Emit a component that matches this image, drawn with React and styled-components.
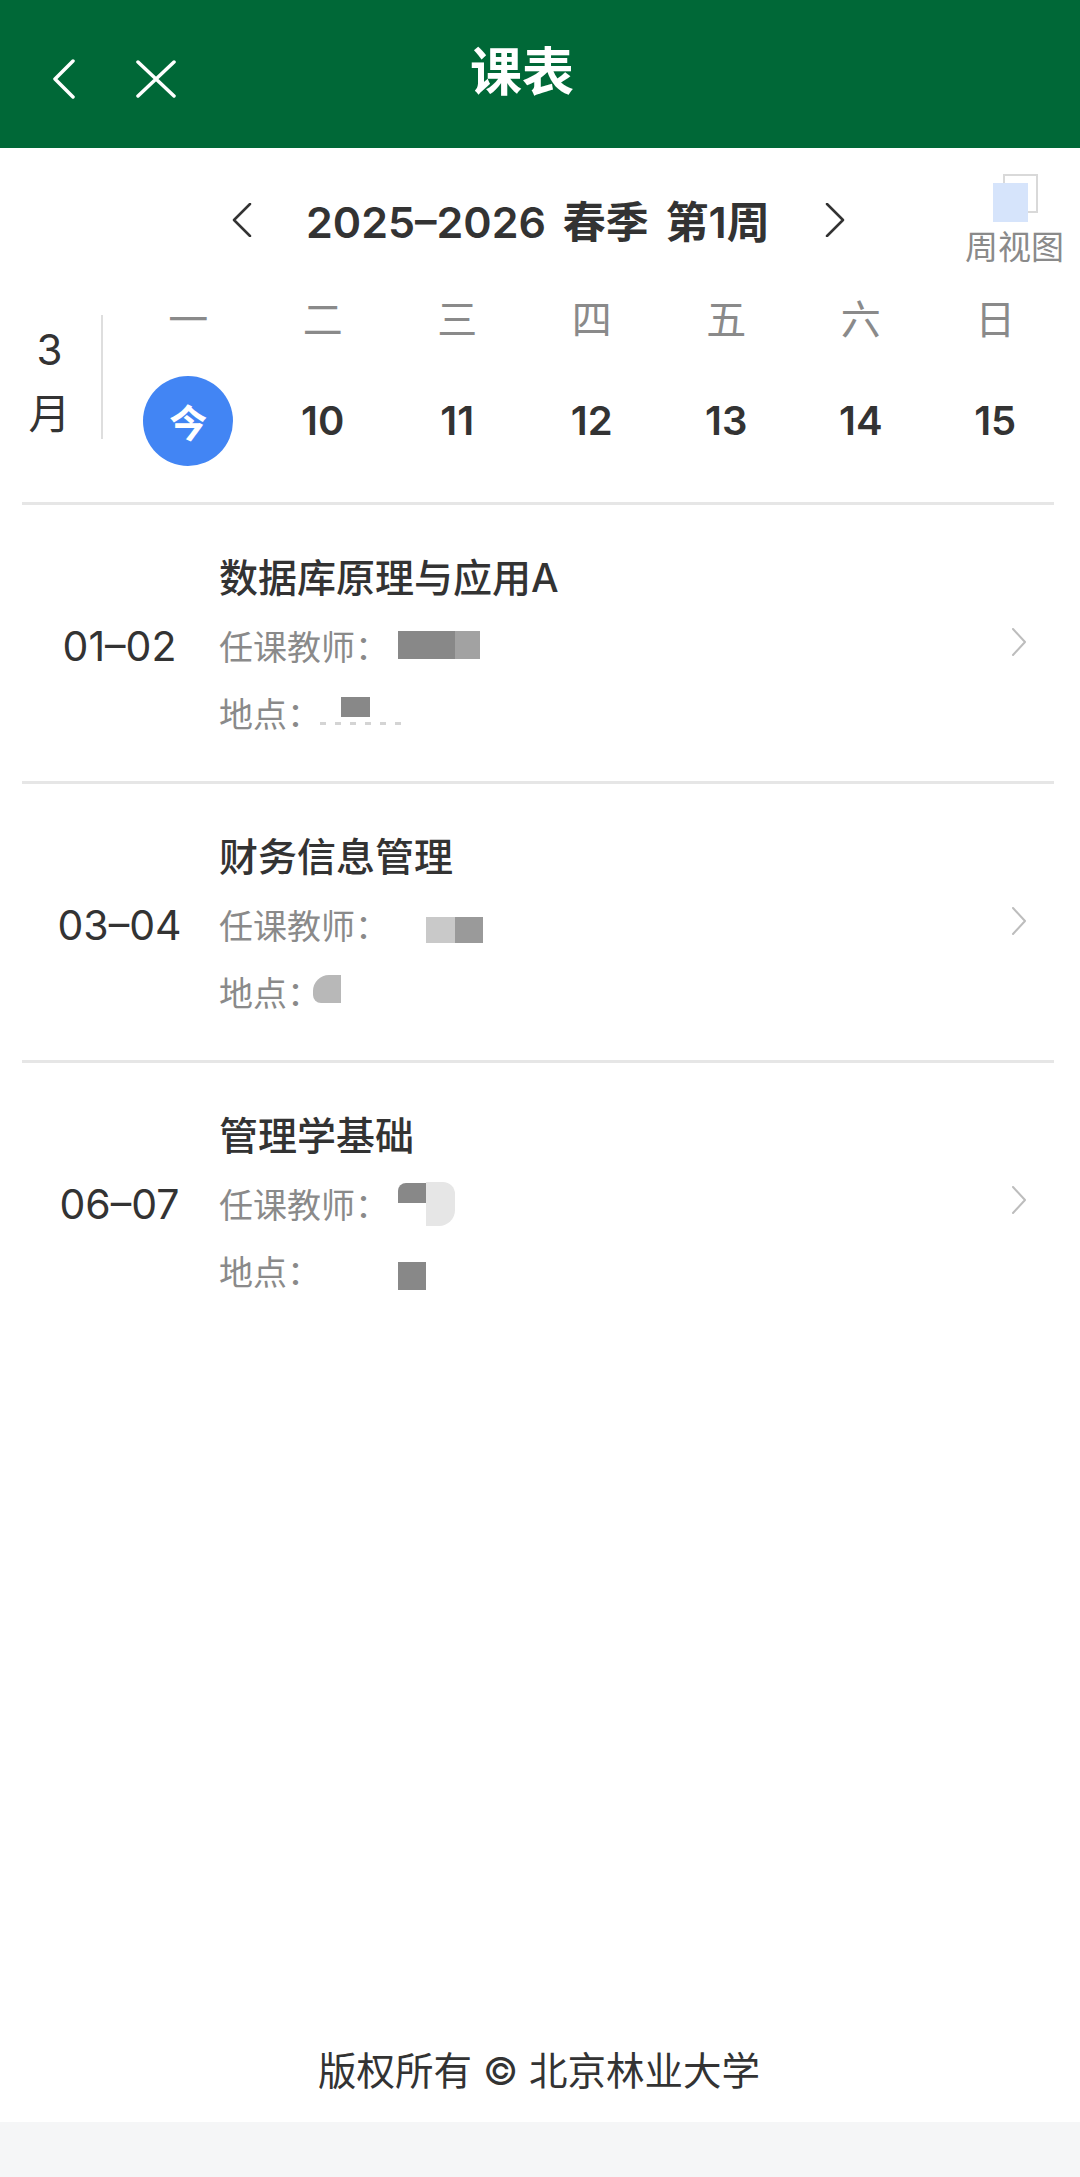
import React from 'react';
import styled, { createGlobalStyle } from 'styled-components';

const GlobalStyle = createGlobalStyle`
html, body { margin: 0; padding: 0; background: #fff; }
body { font-family: "Inter", "Noto Sans CJK SC", sans-serif; color: #333; }
* { box-sizing: border-box; }
`;

const Page = styled.div`
width: 1080px;
height: 2177px;
display: flex;
flex-direction: column;
background: #fff;
`;

const Header = styled.header`
height: 148px;
flex: none;
display: flex;
align-items: flex-start;
background: #006837;
color: #fff;
`;

const NavIcon = styled.svg`
flex: none;
margin-top: ${p => p.$top}px;
margin-left: ${p => p.$left}px;
fill: none;
stroke: #fff;
stroke-width: 3.5;
stroke-linecap: round;
stroke-linejoin: round;
`;

const PageTitle = styled.h1`
margin: 38px 0 0 294px;
font-size: 52px;
line-height: 70px;
font-weight: 700;
`;

const WeekBar = styled.div`
height: 152px;
flex: none;
position: relative;
display: flex;
align-items: flex-start;
padding: 55px 0 0 232px;
`;

const WeekChevron = styled.svg`
flex: none;
fill: none;
stroke: #333;
stroke-width: 2.5;
stroke-linecap: round;
stroke-linejoin: round;
`;

const WeekTitle = styled.div`
width: 573px;
padding-left: 54px;
font-size: 43px;
word-spacing: 6px;
line-height: 50px;
font-weight: 600;
white-space: nowrap;
margin-top: -6px;
`;

const ViewSwitch = styled.div`
position: absolute;
left: 965px;
top: 26px;
width: 100px;
`;

const StackIcon = styled.svg`
display: block;
margin-left: 28px;
`;

const ViewLabel = styled.div`
margin-top: 6px;
font-size: 33px;
line-height: 38px;
color: #8a8a8a;
white-space: nowrap;
`;

const Calendar = styled.div`
height: 205px;
flex: none;
display: flex;
margin: 0 26px 0 22px;
border-bottom: 3px solid #e6e6e6;
`;

const MonthCol = styled.div`
width: 81px;
height: 124px;
margin-top: 15px;
flex: none;
display: flex;
flex-direction: column;
align-items: center;
padding: 12px 24px 0 0;
gap: 18px;
border-right: 2px solid #dedede;
font-size: 42px;
line-height: 46px;
color: #333;
`;

const WeekGrid = styled.div`
width: 941px;
flex: none;
margin-left: 18px;
display: grid;
grid-template-columns: repeat(7, 134.5px);
grid-template-rows: 40px 161px;
justify-items: center;
align-items: center;
align-self: flex-start;
`;

const DayName = styled.div`
font-size: 40px;
line-height: 40px;
color: #8a8a8a;
`;

const DayNum = styled.div`
font-size: 40px;
line-height: 50px;
font-weight: 600;
color: #333;
`;

const TodayDot = styled.div`
width: 90px;
height: 90px;
border-radius: 50%;
background: #4285f4;
color: #fff;
font-size: 38px;
font-weight: 600;
display: flex;
align-items: center;
justify-content: center;
`;

const Row = styled.div`
height: 279px;
flex: none;
display: flex;
align-items: center;
margin: 0 26px 0 22px;
border-bottom: 3px solid ${p => (p.$last ? 'transparent' : '#e6e6e6')};
`;

const Slot = styled.div`
width: 197px;
flex: none;
padding: 6px 2px 0 0;
text-align: center;
font-size: 41px;
line-height: 50px;
color: #333;
`;

const Info = styled.div`
flex: 1;
display: flex;
flex-direction: column;
padding-top: 12px;
`;

const CourseName = styled.div`
font-size: 39px;
line-height: 56px;
font-weight: 500;
color: #333;
`;

const InfoLine = styled.div`
height: 67px;
display: flex;
align-items: center;
margin-top: ${p => p.$top || 0}px;
font-size: 34px;
color: #8a8a8a;
`;

const Label = styled.span`
flex: none;
width: ${p => p.$w}px;
line-height: 50px;
white-space: nowrap;
`;

const Mosaic = styled.span`
flex: none;
display: block;
align-self: flex-start;
margin-top: ${p => p.$top}px;
margin-left: ${p => p.$left || 0}px;
width: ${p => p.$w}px;
height: ${p => p.$h}px;
background: ${p => p.$c};
border-radius: ${p => p.$r || '0'};
`;

const RowChevron = styled.svg`
flex: none;
margin-right: 27px;
margin-top: -2px;
fill: none;
stroke: #bdbdbd;
stroke-width: 2;
stroke-linecap: round;
stroke-linejoin: round;
`;

const Spacer = styled.div`
flex: 1;
`;

const Copyright = styled.div`
flex: none;
height: 85px;
padding-right: 2px;
text-align: center;
font-size: 38.5px;
line-height: 68px;
color: #333;
`;

const BottomBand = styled.div`
flex: none;
height: 55px;
background: #f5f6f7;
`;

const courses = [
  {
    slot: '01–02',
    name: '数据库原理与应用A',
    teacher: [
      { left: 24, top: 17, w: 57, h: 28, c: '#888888' },
      { top: 17, w: 25, h: 28, c: '#a2a2a2' },
    ],
    place: [
      { left: 24, top: 16, w: 29, h: 20, c: '#888888' },
      { left: -50, top: 41, w: 90, h: 3, c: 'repeating-linear-gradient(90deg, #d4d4d4 0 6px, transparent 6px 15px)' },
    ],
  },
  {
    slot: '03–04',
    name: '财务信息管理',
    teacher: [
      { left: 52, top: 24, w: 29, h: 26, c: '#c9c9c9' },
      { top: 24, w: 28, h: 26, c: '#9a9a9a' },
    ],
    place: [{ left: -4, top: 15, w: 28, h: 28, c: '#b8b8b8', r: '16px 0 0 8px' }],
  },
  {
    slot: '06–07',
    name: '管理学基础',
    teacher: [
      { left: 24, top: 11, w: 28, h: 20, c: '#888888', r: '8px 0 0 0' },
      { top: 10, w: 29, h: 44, c: '#e6e6e6', r: '0 12px 16px 0' },
    ],
    place: [{ left: 81, top: 23, w: 28, h: 28, c: '#888888' }],
  },
];

function App() {
  return (
    <Page lang="zh-CN">
      <GlobalStyle />
      <Header>
        <NavIcon $top={59} $left={52} width="24" height="40" viewBox="0 0 24 40">
          <path d="M21 2 L3 20 L21 38" />
        </NavIcon>
        <NavIcon $top={60} $left={60} width="40" height="38" viewBox="0 0 40 38">
          <path d="M2 2 L38 36 M38 2 L2 36" />
        </NavIcon>
        <PageTitle>课表</PageTitle>
      </Header>

      <WeekBar>
        <WeekChevron width="20" height="34" viewBox="0 0 20 34">
          <path d="M18 1 L2 17 L18 33" />
        </WeekChevron>
        <WeekTitle>2025–2026 春季 第1周</WeekTitle>
        <WeekChevron width="20" height="34" viewBox="0 0 20 34">
          <path d="M2 1 L18 17 L2 33" />
        </WeekChevron>
        <ViewSwitch>
          <StackIcon width="46" height="48" viewBox="0 0 46 48">
            <rect x="11" y="1" width="33" height="37" fill="#fff" stroke="#d9d9d9" strokeWidth="2" />
            <rect x="0" y="9" width="35" height="39" fill="#d6e4fb" />
          </StackIcon>
          <ViewLabel>周视图</ViewLabel>
        </ViewSwitch>
      </WeekBar>

      <Calendar>
        <MonthCol>
          <span>3</span>
          <span>月</span>
        </MonthCol>
        <WeekGrid>
          {['一', '二', '三', '四', '五', '六', '日'].map(d => (
            <DayName key={d}>{d}</DayName>
          ))}
          <TodayDot>今</TodayDot>
          {[10, 11, 12, 13, 14, 15].map(n => (
            <DayNum key={n}>{n}</DayNum>
          ))}
        </WeekGrid>
      </Calendar>

      {courses.map((c, i) => (
        <Row key={c.slot} $last={i === courses.length - 1}>
          <Slot>{c.slot}</Slot>
          <Info>
            <CourseName>{c.name}</CourseName>
            <InfoLine $top={8}>
              <Label $w={155}>任课教师：</Label>
              {c.teacher.map((m, j) => (
                <Mosaic key={j} $left={m.left} $top={m.top} $w={m.w} $h={m.h} $c={m.c} $r={m.r} />
              ))}
            </InfoLine>
            <InfoLine>
              <Label $w={98}>地点：</Label>
              {c.place.map((m, j) => (
                <Mosaic key={j} $left={m.left} $top={m.top} $w={m.w} $h={m.h} $c={m.c} $r={m.r} />
              ))}
            </InfoLine>
          </Info>
          <RowChevron width="16" height="28" viewBox="0 0 16 28">
            <path d="M2 1 L14 14 L2 27" />
          </RowChevron>
        </Row>
      ))}

      <Spacer />
      <Copyright>版权所有 © 北京林业大学</Copyright>
      <BottomBand />
    </Page>
  );
}

export default App;
